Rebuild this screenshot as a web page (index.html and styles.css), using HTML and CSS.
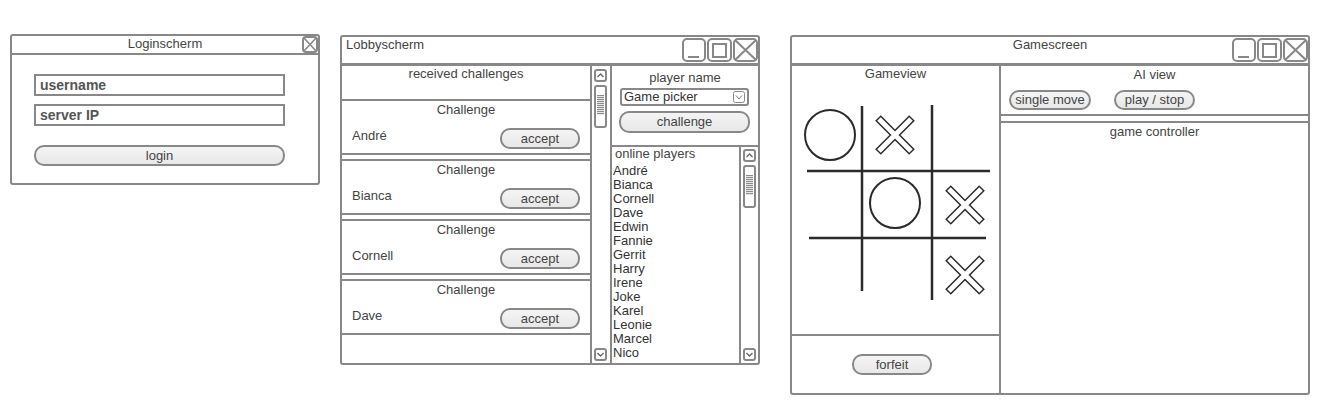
FILE: index.html
```html
<!DOCTYPE html>
<html lang="nl">
<head>
<meta charset="utf-8">
<title>Wireframes</title>
<link rel="stylesheet" href="styles.css">
</head>
<body>
<div class="desk">

  <section class="win login">
    <header class="tbar-sm">
      <span></span>
      <span class="ttl-sm">Loginscherm</span>
      <svg class="close-sm" width="16" height="17" viewBox="0 0 16 17"><rect x="1" y="1" width="14" height="15" rx="3" fill="#fff" stroke="#888" stroke-width="2"/><path d="M2 2 L14 15 M14 2 L2 15" stroke="#888" stroke-width="1.6" fill="none"/></svg>
    </header>
    <div class="login-body">
      <div class="field">username</div>
      <div class="field field-last">server IP</div>
      <div class="btn btn-login">login</div>
    </div>
  </section>

  <section class="win lobby">
    <header class="tbar">
      <span class="ttl-left">Lobbyscherm</span>
      <div class="wbtns">
        <svg width="24" height="24" viewBox="0 0 24 24"><rect x="1" y="1" width="22" height="22" rx="4" fill="#fff" stroke="#888" stroke-width="2"/><path d="M6 19 H17" stroke="#888" stroke-width="2"/></svg>
        <svg width="25" height="24" viewBox="0 0 25 24"><rect x="1" y="1" width="23" height="22" rx="4" fill="#fff" stroke="#888" stroke-width="2"/><rect x="6" y="6" width="13" height="13" fill="none" stroke="#888" stroke-width="2"/></svg>
        <svg width="25" height="24" viewBox="0 0 25 24"><rect x="1" y="1" width="23" height="22" rx="4" fill="#fff" stroke="#888" stroke-width="2"/><path d="M2 2 L23 22 M23 2 L2 22" stroke="#888" stroke-width="2" fill="none"/></svg>
      </div>
    </header>
    <div class="lobby-body">
      <div class="chal-col">
        <div class="chal-head">received challenges</div>
        <div class="chal">
          <div class="chal-ttl">Challenge</div>
          <div class="chal-row"><span class="chal-name">André</span><span class="btn btn-accept">accept</span></div>
        </div>
        <div class="chal">
          <div class="chal-ttl">Challenge</div>
          <div class="chal-row"><span class="chal-name">Bianca</span><span class="btn btn-accept">accept</span></div>
        </div>
        <div class="chal">
          <div class="chal-ttl">Challenge</div>
          <div class="chal-row"><span class="chal-name">Cornell</span><span class="btn btn-accept">accept</span></div>
        </div>
        <div class="chal">
          <div class="chal-ttl">Challenge</div>
          <div class="chal-row"><span class="chal-name">Dave</span><span class="btn btn-accept">accept</span></div>
        </div>
      </div>
      <div class="vscroll">
        <svg class="sbtn" width="13" height="13" viewBox="0 0 13 13"><rect x="1" y="1" width="11" height="11" rx="2" fill="#fff" stroke="#888" stroke-width="2"/><path d="M3.5 8 L6.5 5 L9.5 8" stroke="#666" stroke-width="1.4" fill="none"/></svg>
        <div class="thumb"><div class="grip"></div></div>
        <div class="sfill"></div>
        <svg class="sbtn" width="13" height="13" viewBox="0 0 13 13"><rect x="1" y="1" width="11" height="11" rx="2" fill="#fff" stroke="#888" stroke-width="2"/><path d="M3.5 5 L6.5 8 L9.5 5" stroke="#666" stroke-width="1.4" fill="none"/></svg>
      </div>
      <div class="right-col">
        <div class="pick">
          <div class="pick-ttl">player name</div>
          <div class="combo"><span>Game picker</span><svg width="12" height="12" viewBox="0 0 12 12"><rect x="0.5" y="0.5" width="11" height="11" rx="2" fill="#fff" stroke="#888" stroke-width="1"/><path d="M3 4.5 L6 8 L9 4.5" stroke="#777" stroke-width="1" fill="none"/></svg></div>
          <div class="btn btn-chal">challenge</div>
        </div>
        <div class="online">
          <div class="plist">
            <div class="plist-head">online players</div>
            <div class="pl">André</div>
            <div class="pl">Bianca</div>
            <div class="pl">Cornell</div>
            <div class="pl">Dave</div>
            <div class="pl">Edwin</div>
            <div class="pl">Fannie</div>
            <div class="pl">Gerrit</div>
            <div class="pl">Harry</div>
            <div class="pl">Irene</div>
            <div class="pl">Joke</div>
            <div class="pl">Karel</div>
            <div class="pl">Leonie</div>
            <div class="pl">Marcel</div>
            <div class="pl">Nico</div>
          </div>
          <div class="vscroll vscroll-list">
            <svg class="sbtn" width="13" height="13" viewBox="0 0 13 13"><rect x="1" y="1" width="11" height="11" rx="2" fill="#fff" stroke="#888" stroke-width="2"/><path d="M3.5 8 L6.5 5 L9.5 8" stroke="#666" stroke-width="1.4" fill="none"/></svg>
            <div class="thumb"><div class="grip"></div></div>
            <div class="sfill"></div>
            <svg class="sbtn" width="13" height="13" viewBox="0 0 13 13"><rect x="1" y="1" width="11" height="11" rx="2" fill="#fff" stroke="#888" stroke-width="2"/><path d="M3.5 5 L6.5 8 L9.5 5" stroke="#666" stroke-width="1.4" fill="none"/></svg>
          </div>
        </div>
      </div>
    </div>
  </section>

  <section class="win game">
    <header class="tbar tbar-center">
      <span></span>
      <span class="ttl-center">Gamescreen</span>
      <div class="wbtns">
        <svg width="24" height="24" viewBox="0 0 24 24"><rect x="1" y="1" width="22" height="22" rx="4" fill="#fff" stroke="#888" stroke-width="2"/><path d="M6 19 H17" stroke="#888" stroke-width="2"/></svg>
        <svg width="25" height="24" viewBox="0 0 25 24"><rect x="1" y="1" width="23" height="22" rx="4" fill="#fff" stroke="#888" stroke-width="2"/><rect x="6" y="6" width="13" height="13" fill="none" stroke="#888" stroke-width="2"/></svg>
        <svg width="25" height="24" viewBox="0 0 25 24"><rect x="1" y="1" width="23" height="22" rx="4" fill="#fff" stroke="#888" stroke-width="2"/><path d="M2 2 L23 22 M23 2 L2 22" stroke="#888" stroke-width="2" fill="none"/></svg>
      </div>
    </header>
    <div class="game-body">
      <div class="game-left">
        <div class="gameview">
          <div class="panel-ttl">Gameview</div>
          <svg class="board" width="207" height="250" viewBox="0 0 207 250">
            <g stroke="#2b2b2b" stroke-width="2.5" fill="none">
              <path d="M70 24 V209"/>
              <path d="M140 23 V218"/>
              <path d="M15 89 H198"/>
              <path d="M17 156 H194"/>
            </g>
            <g stroke="#2b2b2b" stroke-width="2" fill="none">
              <circle cx="38" cy="53" r="25"/>
              <circle cx="103" cy="121" r="25"/>
            </g>
            <g fill="none" stroke-linecap="butt">
              <path d="M86 36 L120 70 M120 36 L86 70 M156 106 L190 140 M190 106 L156 140 M156 176 L190 210 M190 176 L156 210" stroke="#2b2b2b" stroke-width="8"/>
              <path d="M87 37 L119 69 M119 37 L87 69 M157 107 L189 139 M189 107 L157 139 M157 177 L189 209 M189 177 L157 209" stroke="#fff" stroke-width="5"/>
            </g>
          </svg>
        </div>
        <div class="forfeit">
          <div class="btn btn-forfeit">forfeit</div>
        </div>
      </div>
      <div class="game-right">
        <div class="ai">
          <div class="panel-ttl2">AI view</div>
          <div class="ai-row">
            <span class="btn btn-single">single move</span>
            <span class="btn btn-play">play / stop</span>
          </div>
        </div>
        <div class="ctrl">
          <div class="panel-ttl2">game controller</div>
        </div>
      </div>
    </div>
  </section>

</div>
</body>
</html>
```

FILE: styles.css
```css
* { box-sizing: border-box; }
html, body { margin: 0; padding: 0; background: #fff; }
body {
  font-family: "Liberation Sans", Arial, sans-serif;
  font-size: 13px;
  color: #444;
}
svg { display: block; }

.desk {
  display: flex;
  align-items: flex-start;
  padding: 34px 0 0 10px;
}

.win {
  border: 2px solid #888;
  border-radius: 3px;
  background: #fff;
  display: flex;
  flex-direction: column;
  overflow: hidden;
}
.login { width: 310px; height: 151px; }
.lobby { width: 420px; height: 330px; margin: 1px 0 0 20px; }
.game  { width: 520px; height: 360px; margin: 1px 0 0 30px; }

/* buttons */
.btn {
  display: block;
  border: 2px solid #888;
  border-radius: 10px;
  background: linear-gradient(#f4f4f4, #e8e8e8);
  text-align: center;
  color: #444;
  font-size: 13px;
}

/* login */
.tbar-sm {
  height: 19px;
  flex: none;
  border-bottom: 2px solid #888;
  display: grid;
  grid-template-columns: 16px 1fr 16px;
  align-items: start;
}
.ttl-sm { text-align: center; line-height: 16px; }
.login-body { padding: 19px 0 0 22px; }
.field {
  width: 251px;
  height: 22px;
  border: 2px solid #888;
  padding-left: 4px;
  font-weight: bold;
  font-size: 14px;
  line-height: 18px;
  color: #555;
  margin-bottom: 8px;
}
.field-last { margin-bottom: 19px; }
.btn-login { width: 251px; height: 21px; line-height: 17px; }

/* large title bars */
.tbar {
  height: 29px;
  flex: none;
  border-bottom: 3px solid #888;
  display: grid;
  grid-template-columns: 1fr auto;
  align-items: start;
}
.tbar-center { grid-template-columns: 1fr auto 1fr; }
.ttl-left { padding-left: 4px; line-height: 15px; }
.ttl-center { line-height: 15px; text-align: center; }
.wbtns {
  display: flex;
  gap: 1px;
  padding-top: 1px;
  justify-self: end;
}

/* lobby */
.lobby-body { flex: 1; display: flex; min-height: 0; }
.chal-col {
  width: 250px;
  border-right: 2px solid #888;
  display: flex;
  flex-direction: column;
}
.chal-head { height: 33px; text-align: center; line-height: 15px; }
.chal {
  height: 56px;
  border-top: 2px solid #888;
  border-bottom: 2px solid #888;
  margin-bottom: 4px;
  padding: 1px 10px 0;
}
.chal-ttl { text-align: center; line-height: 15px; }
.chal-row {
  display: flex;
  justify-content: space-between;
  align-items: flex-start;
  margin-top: 11px;
}
.chal-name { line-height: 15px; }
.btn-accept { width: 80px; height: 21px; line-height: 17px; }

.vscroll {
  width: 18px;
  display: flex;
  flex-direction: column;
  padding: 3px 0 2px 2px;
}
.vscroll-list { width: 17px; padding-top: 2px; }
.thumb {
  width: 13px;
  height: 43px;
  margin-top: 3px;
  border: 2px solid #888;
  border-radius: 3px;
  padding-top: 8px;
}
.grip {
  width: 7px;
  height: 20px;
  margin: 0 auto;
  background: repeating-linear-gradient(#8c8c8c 0 1px, #e6e6e6 1px 2px);
}
.sfill { flex: 1; }

.right-col {
  width: 148px;
  border-left: 2px solid #888;
  display: flex;
  flex-direction: column;
}
.pick {
  height: 81px;
  flex: none;
  border-bottom: 2px solid #888;
  padding-top: 4px;
}
.pick-ttl { text-align: center; line-height: 15px; }
.combo {
  width: 129px;
  height: 18px;
  margin: 3px 0 0 8px;
  border: 2px solid #888;
  border-radius: 3px;
  padding: 0 2px 0 2px;
  display: flex;
  justify-content: space-between;
  align-items: center;
  line-height: 14px;
  color: #333;
}
.btn-chal { width: 131px; height: 22px; margin: 5px 0 0 7px; line-height: 18px; }

.online { flex: 1; display: flex; min-height: 0; }
.plist {
  flex: 1;
  border-right: 2px solid #888;
  padding-left: 1px;
  overflow: hidden;
  color: #333;
}
.plist-head { line-height: 14px; margin-bottom: 3px; padding-left: 2px; color: #444; }
.pl { line-height: 14px; }

/* game */
.game-body { flex: 1; display: flex; min-height: 0; }
.game-left {
  width: 209px;
  border-right: 2px solid #888;
  display: flex;
  flex-direction: column;
}
.gameview { height: 270px; border-bottom: 2px solid #888; }
.panel-ttl { text-align: center; line-height: 16px; }
.forfeit { flex: 1; padding: 18px 0 0 60px; }
.btn-forfeit { width: 80px; height: 21px; line-height: 17px; }

.game-right { flex: 1; display: flex; flex-direction: column; }
.ai { height: 50px; border-bottom: 2px solid #888; padding-top: 1px; }
.panel-ttl2 { text-align: center; line-height: 15px; }
.ai-row { display: flex; gap: 23px; padding-left: 8px; margin-top: 8px; }
.btn-single { width: 82px; height: 20px; line-height: 16px; }
.btn-play { width: 81px; height: 20px; line-height: 16px; }
.ctrl { flex: 1; margin-top: 5px; border-top: 2px solid #888; padding-top: 1px; }
```
